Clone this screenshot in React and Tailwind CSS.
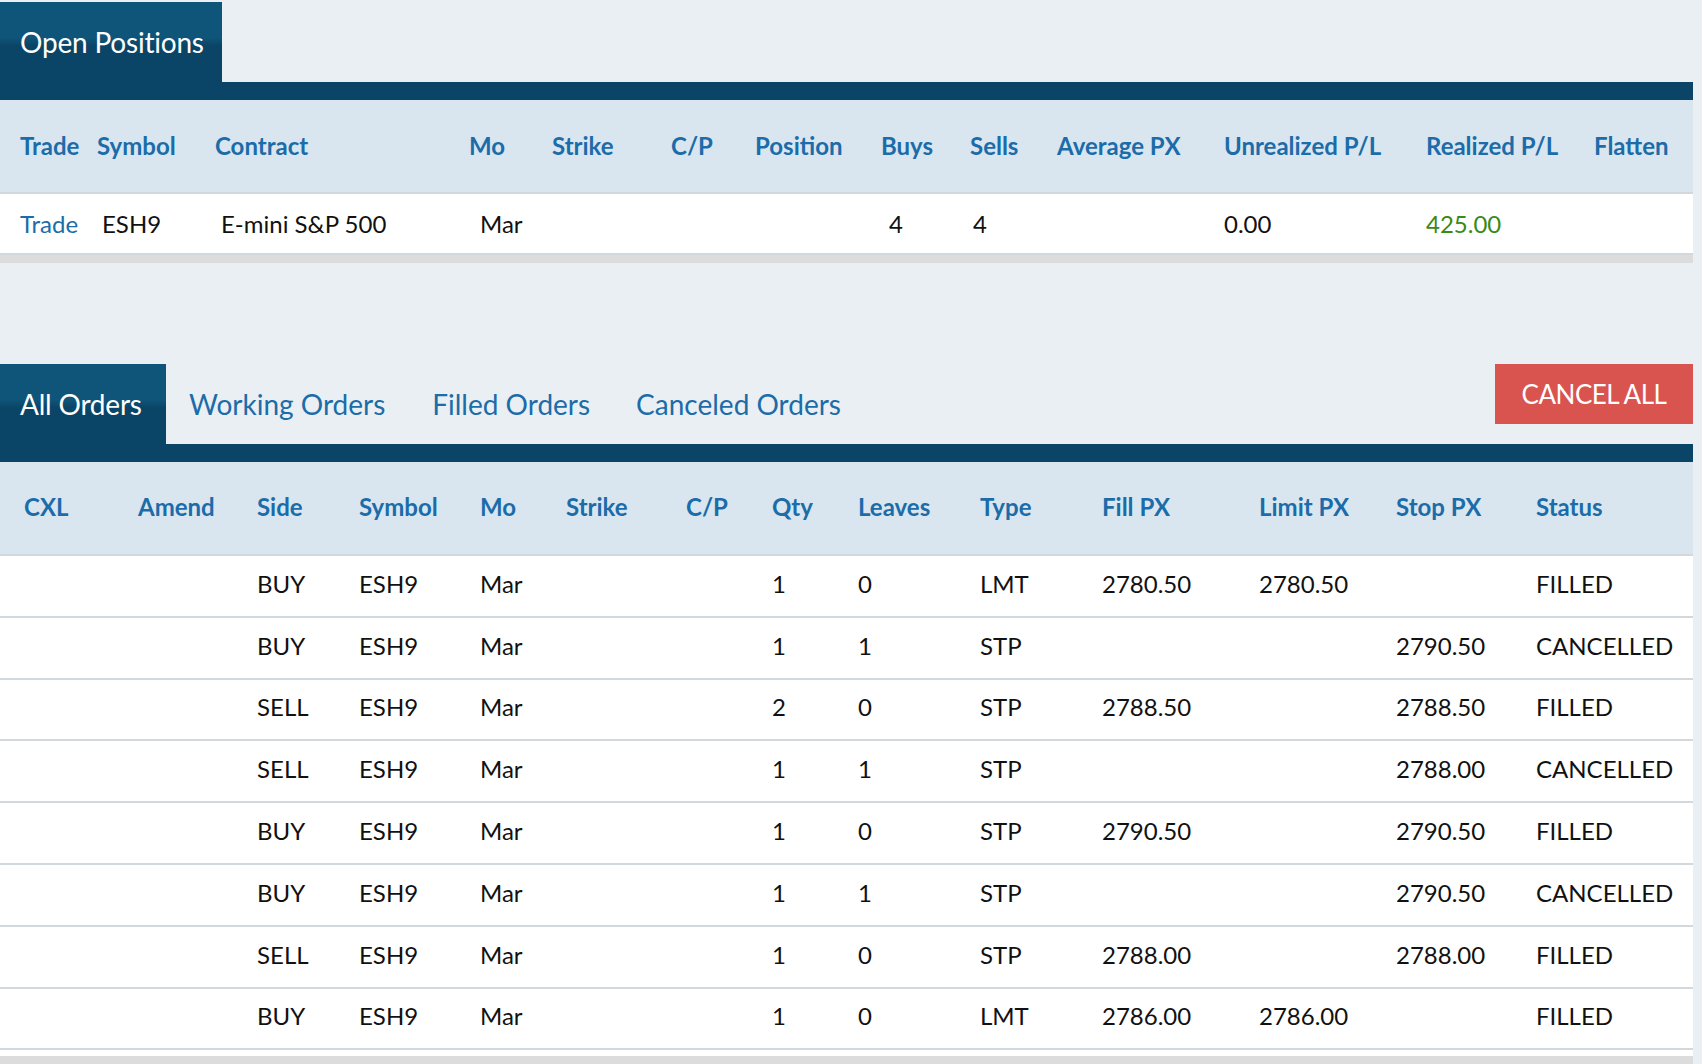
const positionHead = ['Trade', 'Symbol', 'Contract', 'Mo', 'Strike', 'C/P', 'Position', 'Buys', 'Sells', 'Average PX', 'Unrealized P/L', 'Realized P/L', 'Flatten']

const orderHead = ['CXL', 'Amend', 'Side', 'Symbol', 'Mo', 'Strike', 'C/P', 'Qty', 'Leaves', 'Type', 'Fill PX', 'Limit PX', 'Stop PX', 'Status']

// side, symbol, mo, strike, c/p, qty, leaves, type, fill, limit, stop, status
const orders = [
  ['BUY', 'ESH9', 'Mar', '', '', '1', '0', 'LMT', '2780.50', '2780.50', '', 'FILLED'],
  ['BUY', 'ESH9', 'Mar', '', '', '1', '1', 'STP', '', '', '2790.50', 'CANCELLED'],
  ['SELL', 'ESH9', 'Mar', '', '', '2', '0', 'STP', '2788.50', '', '2788.50', 'FILLED'],
  ['SELL', 'ESH9', 'Mar', '', '', '1', '1', 'STP', '', '', '2788.00', 'CANCELLED'],
  ['BUY', 'ESH9', 'Mar', '', '', '1', '0', 'STP', '2790.50', '', '2790.50', 'FILLED'],
  ['BUY', 'ESH9', 'Mar', '', '', '1', '1', 'STP', '', '', '2790.50', 'CANCELLED'],
  ['SELL', 'ESH9', 'Mar', '', '', '1', '0', 'STP', '2788.00', '', '2788.00', 'FILLED'],
  ['BUY', 'ESH9', 'Mar', '', '', '1', '0', 'LMT', '2786.00', '2786.00', '', 'FILLED'],
]

/* column grids (px widths taken from the screenshot) */
const posHeadCols = 'grid grid-cols-[77px_118px_254px_83px_119px_84px_126px_89px_87px_167px_202px_168px_1fr]'
const posRowCols = 'grid grid-cols-[82px_119px_259px_72px_119px_84px_134px_84px_84px_167px_202px_168px_1fr]'
const orderCols = 'grid grid-cols-[114px_119px_102px_121px_86px_120px_86px_86px_122px_122px_157px_137px_140px_1fr]'

export default function App() {
  return (
    <div className="min-h-[1064px] w-full bg-[#eaeff3] pt-[2px] font-['Lato','Liberation_Sans',sans-serif]">
      <div className="w-[1693px]">
        {/* ── Open Positions ── */}
        <div className="flex h-[80px]">
          <div className="flex w-[222px] items-center pl-5 text-[28px] tracking-[-0.2px] text-white bg-linear-to-b from-[#0f5479] from-45% to-[#0a4466] to-55%">
            Open Positions
          </div>
        </div>
        <div className="h-[18px] bg-[#0a4466]" />

        <div className={`${posHeadCols} h-[94px] items-center border-b-2 border-[#d3d8dc] bg-[#d9e6f0] pl-[20px] text-[24px] font-bold text-[#1b6ca9]`}>
          {positionHead.map((h) => (
            <div key={h} className="whitespace-nowrap">{h}</div>
          ))}
        </div>
        <div className={`${posRowCols} h-[59px] items-center bg-white pl-[20px] text-[24px] text-[#111]`}>
          <div className="text-[#1b6ca9]">Trade</div>
          <div>ESH9</div>
          <div className="whitespace-nowrap">E-mini S&amp;P 500</div>
          <div>Mar</div>
          <div />
          <div />
          <div />
          <div>4</div>
          <div>4</div>
          <div />
          <div>0.00</div>
          <div className="text-[#3a8a16]">425.00</div>
          <div />
        </div>
        <div className="h-[10px] border-t-2 border-[#d3d8dc] bg-[#dcdcdc]" />

        {/* ── Orders ── */}
        <div className="mt-[101px] flex h-[80px] items-start">
          <div className="flex h-full w-[166px] items-center pl-5 text-[28px] tracking-[-0.2px] text-white bg-linear-to-b from-[#0f5479] from-45% to-[#0a4466] to-55%">
            All Orders
          </div>
          <div className="flex h-full items-center pl-[23px] pr-[25px] text-[28px] text-[#1b6ca9]">Working Orders</div>
          <div className="flex h-full items-center pl-[22px] pr-[24px] text-[28px] text-[#1b6ca9]">Filled Orders</div>
          <div className="flex h-full items-center px-[22px] text-[28px] text-[#1b6ca9]">Canceled Orders</div>
          <button className="ml-auto flex h-[60px] w-[198px] items-center justify-center bg-[#d9534f] text-[26px] tracking-[-0.5px] text-white">
            CANCEL ALL
          </button>
        </div>
        <div className="h-[18px] bg-[#0a4466]" />

        <div className={`${orderCols} h-[94px] items-center border-b-2 border-[#d3d8dc] bg-[#d9e6f0] pb-[3px] pl-[24px] text-[24px] font-bold text-[#1b6ca9]`}>
          {orderHead.map((h) => (
            <div key={h} className="whitespace-nowrap">{h}</div>
          ))}
        </div>
        <div className="bg-white">
          {orders.map((o, i) => (
            <div key={i} className={`${orderCols} h-[61.8px] items-center border-b-2 border-[#d3d8dc] pb-[4px] pl-[24px] text-[24px] text-[#111]`}>
              <div />
              <div />
              {o.map((v, j) => (
                <div key={j} className="whitespace-nowrap">{v}</div>
              ))}
            </div>
          ))}
          <div className="h-[6px]" />
        </div>
        <div className="h-[8px] bg-[#dcdcdc]" />
      </div>
    </div>
  )
}
